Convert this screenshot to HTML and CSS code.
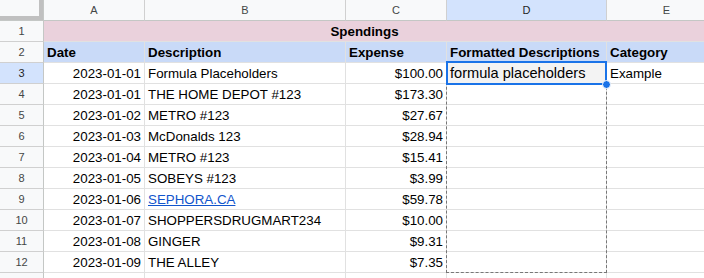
FILE: index.html
```html
<!DOCTYPE html>
<html>
<head>
<meta charset="utf-8">
<link rel="stylesheet" href="styles.css">
</head>
<body>
<div class="sheet">
  <div class="grid">
    <div class="corner"></div>
    <div class="colhead">A</div>
    <div class="colhead">B</div>
    <div class="colhead">C</div>
    <div class="colhead sel">D</div>
    <div class="colhead">E</div>

    <div class="rowhead">1</div>
    <div class="cell title">Spendings</div>

    <div class="rowhead">2</div>
    <div class="cell hdr">Date</div>
    <div class="cell hdr">Description</div>
    <div class="cell hdr">Expense</div>
    <div class="cell hdr">Formatted Descriptions</div>
    <div class="cell hdr">Category</div>

    <div class="rowhead sel">3</div>
    <div class="cell num">2023-01-01</div>
    <div class="cell">Formula Placeholders</div>
    <div class="cell num">$100.00</div>
    <div class="cell active">formula placeholders</div>
    <div class="cell">Example</div>

    <div class="rowhead">4</div>
    <div class="cell num">2023-01-01</div>
    <div class="cell">THE HOME DEPOT #123</div>
    <div class="cell num">$173.30</div>
    <div class="cell"></div>
    <div class="cell"></div>

    <div class="rowhead">5</div>
    <div class="cell num">2023-01-02</div>
    <div class="cell">METRO #123</div>
    <div class="cell num">$27.67</div>
    <div class="cell"></div>
    <div class="cell"></div>

    <div class="rowhead">6</div>
    <div class="cell num">2023-01-03</div>
    <div class="cell">McDonalds 123</div>
    <div class="cell num">$28.94</div>
    <div class="cell"></div>
    <div class="cell"></div>

    <div class="rowhead">7</div>
    <div class="cell num">2023-01-04</div>
    <div class="cell">METRO #123</div>
    <div class="cell num">$15.41</div>
    <div class="cell"></div>
    <div class="cell"></div>

    <div class="rowhead">8</div>
    <div class="cell num">2023-01-05</div>
    <div class="cell">SOBEYS #123</div>
    <div class="cell num">$3.99</div>
    <div class="cell"></div>
    <div class="cell"></div>

    <div class="rowhead">9</div>
    <div class="cell num">2023-01-06</div>
    <div class="cell"><span class="link">SEPHORA.CA</span></div>
    <div class="cell num">$59.78</div>
    <div class="cell"></div>
    <div class="cell"></div>

    <div class="rowhead">10</div>
    <div class="cell num">2023-01-07</div>
    <div class="cell">SHOPPERSDRUGMART234</div>
    <div class="cell num">$10.00</div>
    <div class="cell"></div>
    <div class="cell"></div>

    <div class="rowhead">11</div>
    <div class="cell num">2023-01-08</div>
    <div class="cell">GINGER</div>
    <div class="cell num">$9.31</div>
    <div class="cell"></div>
    <div class="cell"></div>

    <div class="rowhead">12</div>
    <div class="cell num">2023-01-09</div>
    <div class="cell">THE ALLEY</div>
    <div class="cell num">$7.35</div>
    <div class="cell"></div>
    <div class="cell"></div>

    <div class="rowhead"></div>
    <div class="cell"></div>
    <div class="cell"></div>
    <div class="cell"></div>
    <div class="cell"></div>
    <div class="cell"></div>
  </div>
  <div class="copybox"></div>
  <div class="activebox"><span class="handle"></span></div>
</div>
</body>
</html>
```

FILE: styles.css
```css
html, body {
  margin: 0;
  padding: 0;
  background: #fff;
  overflow: hidden;
}
.sheet {
  position: relative;
  width: 704px;
  height: 278px;
  overflow: hidden;
  font-family: "Liberation Sans", Arial, sans-serif;
}
.grid {
  display: grid;
  grid-template-columns: 44px 101px 201px 101px 160px 120px;
  grid-auto-rows: 21px;
}
.grid > div {
  box-sizing: border-box;
  border-right: 1px solid #e1e1e1;
  border-bottom: 1px solid #e1e1e1;
  white-space: nowrap;
  overflow: hidden;
}
.corner {
  background: #f8f9fa;
  border-right: 1px solid #c4c7c5 !important;
  border-bottom: 1px solid #c4c7c5 !important;
  box-shadow: inset -4px -4px 0 #c0c0c0;
}
.colhead {
  background: #f8f9fa;
  color: #444746;
  font-size: 11px;
  line-height: 21px;
  text-align: center;
  border-bottom: 1px solid #c4c7c5 !important;
  border-right: 1px solid #d0d0d0 !important;
}
.rowhead {
  background: #f8f9fa;
  color: #444746;
  font-size: 11px;
  line-height: 20px;
  text-align: center;
  border-right: 1px solid #c4c7c5 !important;
  border-bottom: 1px solid #d0d0d0 !important;
}
.colhead.sel, .rowhead.sel {
  background: #d3e3fd;
  color: #1f1f1f;
}
.cell {
  font-size: 13.33px;
  line-height: 20px;
  padding: 1px 3px 0;
  color: #000;
}
.title {
  grid-column: 2 / span 5;
  background: #ead1dc;
  font-weight: bold;
  text-align: center;
  padding-right: 44px;
}
.hdr {
  background: #c9daf8;
  font-weight: bold;
}
.num {
  text-align: right;
}
.active {
  background: #f3f3f3;
  font-size: 14.6px;
  line-height: 20px;
  padding-top: 0;
}
.link {
  color: #1155cc;
  text-decoration: underline;
}
.copybox {
  position: absolute;
  left: 446px;
  top: 62px;
  width: 161px;
  height: 211px;
  box-sizing: border-box;
  border: 1px dashed #777;
  pointer-events: none;
}
.activebox {
  position: absolute;
  left: 446px;
  top: 61px;
  width: 161px;
  height: 24px;
  box-sizing: border-box;
  border: 2px solid #1a73e8;
}
.handle {
  position: absolute;
  right: -6px;
  bottom: -6px;
  width: 7px;
  height: 7px;
  border-radius: 50%;
  background: #1a73e8;
  border: 1px solid #fff;
}
```
